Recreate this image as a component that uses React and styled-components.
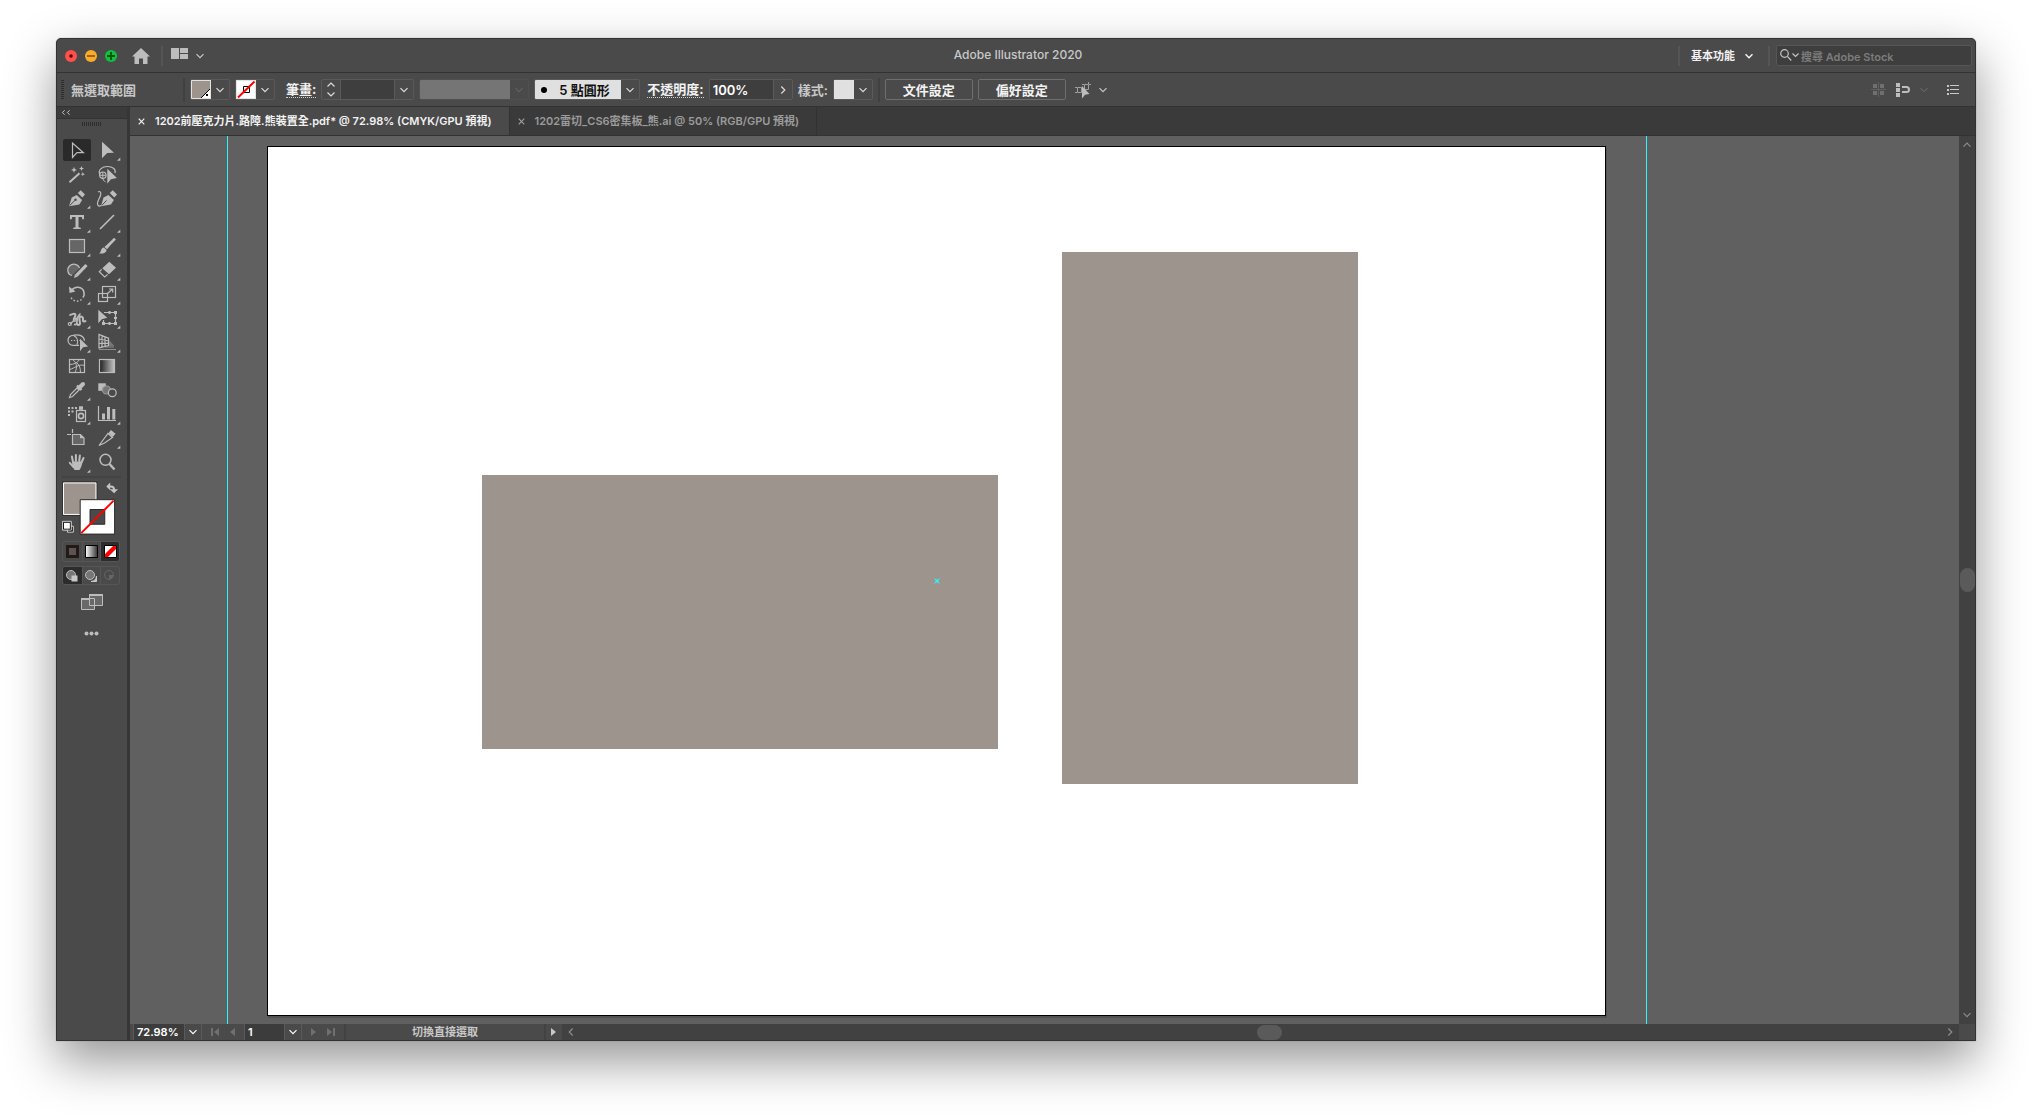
import React, { useState } from 'react';
import styled, { createGlobalStyle, css } from 'styled-components';

const colors = {
  bar: '#4a4a4a',
  dark: '#3b3b3b',
  line: '#323232',
  edge: '#5a5a5a',
  canvas: '#606060',
  icon: '#bdbdbd',
  text: '#c8c8c8',
  white: '#f2f2f2',
  taupe: '#9d948e',
  guide: '#2ff3f7',
};

const GlobalStyle = createGlobalStyle`
  * { box-sizing: border-box; }
  body {
    margin: 0;
    background: #fff;
    color: ${colors.text};
    font-family: Inter, "Noto Sans CJK TC", sans-serif;
    font-size: 11px;
    line-height: 16px;
  }
  button, input, select { font: inherit; color: inherit; }
`;

const Desktop = styled.div`
  height: 100vh;
  padding: 38px 56px 74px;
  display: flex;
`;

const Window = styled.div`
  flex: 1;
  min-width: 0;
  display: flex;
  flex-direction: column;
  border: 1px solid ${colors.line};
  border-radius: 5px 5px 0 0;
  background: ${colors.bar};
  box-shadow: 0 0 1px rgba(0, 0, 0, 0.5), 0 20px 50px rgba(0, 0, 0, 0.42);
  overflow: hidden;
`;

const PlainButton = styled.button`
  display: flex;
  align-items: center;
  justify-content: center;
  padding: 0;
  border: none;
  background: none;
  cursor: pointer;
`;

const Spacer = styled.div`
  flex: 1;
`;

const Divider = styled.div`
  width: 2px;
  height: ${props => props.$h || 20}px;
  margin-left: ${props => props.$ml || 0}px;
  background: ${props => (props.$dark ? '#404040' : '#555')};
`;

/* ---------- title bar ---------- */

const TitleBar = styled.header`
  height: 34px;
  flex: none;
  display: grid;
  grid-template-columns: 1fr auto 1fr;
  align-items: center;
  border-bottom: 1px solid ${colors.line};
`;

const TitleLeft = styled.div`
  display: flex;
  align-items: center;
  gap: 8px;
  padding-left: 8px;
`;

const TitleRight = styled(TitleLeft)`
  justify-content: flex-end;
  gap: 6px;
  padding: 0 3px 0 0;
`;

const Light = styled(PlainButton)`
  width: 12px;
  height: 12px;
  border-radius: 50%;
  background: ${props => props.$color};
`;

const HomeButton = styled(PlainButton)`
  margin: 0 3px 0 7px;
`;

const LayoutButton = styled(PlainButton)`
  gap: 8px;
  color: ${colors.text};
`;

const AppTitle = styled.h1`
  margin: 0;
  padding: 0 0 2px 4px;
  font-size: 12px;
  line-height: 16px;
  font-weight: 500;
`;

const SelectBox = styled.span`
  position: relative;
  display: flex;
  align-items: center;
`;

const BareSelect = styled.select`
  appearance: none;
  border: none;
  outline: none;
  background: none;
  padding: 0;
  height: 18px;
  line-height: 18px;
`;

const WorkspaceSelect = styled(SelectBox)`
  gap: 10px;
  margin: 0 9px 0 5px;
  color: ${colors.white};
  font-weight: 600;
`;

const SearchField = styled.label`
  width: 196px;
  height: 21px;
  display: flex;
  align-items: center;
  gap: 2px;
  padding-left: 3px;
  border: 1px solid #565656;
  border-radius: 2px;
  background: #3e3e3e;

  input {
    flex: 1;
    min-width: 0;
    padding: 2px 0 0;
    border: none;
    outline: none;
    background: none;
  }
  input::placeholder {
    color: #7c7c7c;
    opacity: 1;
    font-weight: 600;
  }
`;

/* ---------- control bar ---------- */

const ControlBar = styled.div`
  height: 34px;
  flex: none;
  display: flex;
  align-items: center;
  padding: 0 16px 0 4px;
  border-bottom: 1px solid ${colors.line};
  font-size: 13px;
  white-space: nowrap;
`;

const Grip = styled.div`
  width: ${props => (props.$wide ? '20px' : '3px')};
  height: ${props => (props.$wide ? '4px' : '20px')};
  background: repeating-linear-gradient(
    ${props => (props.$wide ? '90deg' : '180deg')},
    #2e2e2e 0 1px,
    transparent 1px 2px
  );
`;

const SelectionLabel = styled.div`
  width: 119px;
  padding-left: 7px;
  font-weight: 600;
`;

const Group = styled.div`
  display: flex;
  align-items: center;
  margin-left: 5px;
  height: 21px;
  width: ${props => (props.$w ? `${props.$w}px` : 'auto')};
  border: 1px solid #5a5a5a;
  border-radius: 2px;
  overflow: hidden;

  ${props => props.$dim && css`
    border-color: #505050;
  `}
`;

const DropButton = styled(PlainButton)`
  width: ${props => props.$w || 18}px;
  height: 100%;
  color: ${props => (props.$dim ? '#616161' : '#dcdcdc')};
`;

const Swatch = styled.span`
  display: block;
  width: 20px;
  height: 19px;
  border: 1px solid #e2e2e2;
  background: ${props => props.$color};

  svg { display: block; }
`;

const DottedLabel = styled.label`
  margin-left: ${props => props.$ml}px;
  color: ${colors.white};
  font-weight: 700;
  line-height: 15px;
  border-bottom: 1px dotted #d0d0d0;
`;

const FieldInput = styled.input`
  flex: 1;
  min-width: 0;
  height: 100%;
  padding: 0 3px;
  border: solid ${colors.edge};
  border-width: 0 1px;
  border-left-width: ${props => (props.$first ? 0 : 1)}px;
  outline: none;
  background: #3e3e3e;
  color: #fff;
  font-weight: 600;
`;

const StrokeProfile = styled.div`
  width: 90px;
  height: 100%;
  background: #757575;
`;

const BrushValue = styled.span`
  flex: 1;
  height: 100%;
  display: flex;
  align-items: center;
  gap: 12px;
  padding-left: 6px;
  background: #e0e0e0;
  color: #111;
  font-weight: 600;
`;

const BrushDot = styled.span`
  width: 6px;
  height: 6px;
  border-radius: 50%;
  background: #000;
`;

const StyleLabel = styled.span`
  margin-left: 5px;
  font-weight: 600;
`;

const OutlineButton = styled(PlainButton)`
  width: 88px;
  height: 21px;
  margin-left: 5px;
  border: 1px solid #6e6e6e;
  border-radius: 2px;
  color: ${colors.white};
  font-weight: 700;
`;

const AlignTools = styled(PlainButton)`
  gap: 8px;
  margin-left: 9px;
  color: ${colors.text};
`;

const RightTools = styled.div`
  display: flex;
  align-items: center;
  gap: 9px;
  color: #707070;

  button:last-child { margin-left: 10px; }
`;

/* ---------- tool panel ---------- */

const Body = styled.div`
  flex: 1;
  min-height: 0;
  display: flex;
`;

const Panel = styled.aside`
  width: 73px;
  flex: none;
  display: flex;
  flex-direction: column;
  border-right: 3px solid #363636;
`;

const PanelHead = styled.div`
  height: 12px;
  display: flex;
  align-items: center;
  padding-left: 4px;
  background: ${colors.dark};
  border-bottom: 1px solid ${colors.line};
`;

const PanelBody = styled.div`
  display: flex;
  flex-direction: column;
  padding: 3px 6px 0 5px;
`;

const GripRow = styled.div`
  display: flex;
  justify-content: center;
  height: 17px;
`;

const ToolGrid = styled.div`
  display: grid;
  grid-template-columns: 28px 28px;
  gap: 2px;
  padding-left: 1px;
`;

const ToolButton = styled(PlainButton)`
  width: 28px;
  height: 22px;
  border-radius: 2px;
  color: ${colors.icon};
  background: ${props => (props.$active ? '#2a2a2a' : 'none')};
`;

const PanelRule = styled.div`
  height: 2px;
  margin: 3px 0;
  background: #434343;
`;

const ColorArea = styled.div`
  display: flex;
  height: 58px;
  margin-bottom: 2px;
`;

const CellRow = styled.div`
  display: grid;
  grid-template-columns: repeat(3, 1fr);
  height: ${props => props.$h}px;
  margin: 0 1px 4px 0;
  border: 1px solid #565656;
  border-radius: 3px;
  overflow: hidden;
`;

const Cell = styled(PlainButton)`
  background: ${props => (props.$active ? '#2c2c2c' : 'none')};

  & + & { border-left: 1px solid #565656; }
`;

const PanelFoot = styled.div`
  display: flex;
  flex-direction: column;
  align-items: center;
  gap: 21px;
  padding-top: 5px;
`;

/* ---------- document area ---------- */

const Main = styled.main`
  flex: 1;
  min-width: 0;
  display: flex;
  flex-direction: column;
`;

const Tabs = styled.div`
  height: 29px;
  flex: none;
  display: flex;
  background: #3a3a3a;
  border-bottom: 1px solid ${colors.line};
`;

const Tab = styled.div`
  display: flex;
  align-items: center;
  gap: 10px;
  padding: 0 17px 0 8px;
  border-right: 1px solid ${colors.line};
  background: ${props => (props.$active ? colors.bar : 'none')};
  color: ${props => (props.$active ? colors.white : '#9c9c9c')};
  font-weight: 600;
  white-space: nowrap;
`;

const CanvasRow = styled.div`
  flex: 1;
  min-height: 0;
  display: flex;
`;

const Canvas = styled.div`
  position: relative;
  flex: 1;
  min-width: 0;
  background: ${colors.canvas};
  overflow: hidden;
`;

const Artboard = styled.div`
  position: absolute;
  left: 137px;
  top: 10px;
  width: 1339px;
  height: 870px;
  background: #fff;
  border: 1px solid #000;
  box-shadow: 1px 2px 0 #525252;
`;

const Shape = styled.div`
  position: absolute;
  left: ${props => props.$x}px;
  top: ${props => props.$y}px;
  width: ${props => props.$w}px;
  height: ${props => props.$h}px;
  background: ${colors.taupe};
`;

const Guide = styled.div`
  position: absolute;
  left: ${props => props.$x}px;
  top: 0;
  bottom: 0;
  width: 1px;
  background: ${colors.guide};
`;

const CenterMark = styled.svg`
  position: absolute;
  left: 666px;
  top: 431px;
`;

const VScroll = styled.div`
  width: 16px;
  flex: none;
  display: flex;
  flex-direction: column;
  align-items: center;
  padding: 5px 0;
  background: #414141;
  color: #8c8c8c;
`;

const Thumb = styled.div`
  width: ${props => props.$w}px;
  height: ${props => props.$h}px;
  border-radius: 8px;
  background: #5a5a5a;
`;

const StatusBar = styled.footer`
  height: 16px;
  flex: none;
  display: flex;
  padding-left: 3px;
  color: ${colors.text};
`;

const StatusField = styled(SelectBox)`
  width: ${props => props.$w}px;
  padding-left: 3px;
  background: #3c3c3c;
  color: #fff;
  font-weight: 600;
  border-left: 1px solid ${colors.edge};

  select { flex: 1; min-width: 0; }
`;

const DropMark = styled.span`
  width: 18px;
  height: 100%;
  display: flex;
  align-items: center;
  justify-content: center;
  background: ${colors.bar};
  border: solid ${colors.edge};
  border-width: 0 1px;
  pointer-events: none;
`;

const PageNav = styled.div`
  width: 42px;
  display: flex;
  align-items: center;
  justify-content: center;
  gap: 10px;
  color: #707070;
`;

const StatusText = styled.div`
  width: 202px;
  border: solid #424242;
  border-width: 0 2px;
  text-align: center;
  line-height: 17px;
  font-weight: 600;
`;

const HScroll = styled.div`
  flex: 1;
  min-width: 0;
  display: flex;
  align-items: center;
  padding: 0 5px;
  background: #414141;
  color: #8c8c8c;
`;

const ScrollCorner = styled.div`
  width: 16px;
`;

const Track = styled.div`
  flex: ${props => props.$grow};
`;

/* ---------- icons ---------- */

const chevronPaths = {
  down: 'M0.5 2.2 4 5.7 7.5 2.2',
  up: 'M0.5 5.7 4 2.2 7.5 5.7',
  left: 'M5.7 0.5 2.2 4l3.5 3.5',
  right: 'M2.3 0.5 5.8 4 2.3 7.5',
};

const Chevron = ({ dir = 'down', size = 8, w = 1.2 }) => (
  <svg width={size} height={size} viewBox="0 0 8 8" fill="none" stroke="currentColor" strokeWidth={w}>
    <path d={chevronPaths[dir]} />
  </svg>
);

const CloseIcon = () => (
  <svg width="7" height="7" viewBox="0 0 7 7" stroke="currentColor" strokeWidth="1.2">
    <path d="M.7.7l5.600 5.600M6.300.7L.7 6.300" />
  </svg>
);

const solid = { fill: 'currentColor', stroke: 'none' };

const tools = [
  { name: '選取', art: <path d="M9.500 4v14.500l4.500-4.800h6.400z" /> },
  { name: '直接選取', more: true, art: <path d="M9 2.700v16.600l5.200-5.200L21 13.700z" {...solid} /> },
  {
    name: '魔術棒',
    art: (
      <>
        <path d="M6.500 19.300l10-9" strokeWidth="2" />
        <path d="M11 3.800l.8 2.200 2.200.9-2.200.9-.8 2.200-.8-2.200-2.200-.9 2.200-.9zM18.500 3l.7 1.800 1.800.7-1.800.7-.7 1.800-.7-1.800-1.800-.7 1.800-.7zM19.800 9l.6 1.600 1.600.6-1.600.6-.6 1.600-.6-1.600-1.600-.6 1.600-.6z" {...solid} />
      </>
    ),
  },
  {
    name: '套索',
    art: (
      <>
        <path d="M7 11.500C4.500 7 9 3.500 14.500 3.500c5 0 8.500 2.500 7.500 6.500" />
        <circle cx="9.800" cy="12.200" r="3.200" />
        <path d="M7 12.300h5.800M9.800 9v5.500c0 2.200.8 3.500 2.700 4.300" strokeWidth="1" />
        <path d="M14.300 5.800v15l3.600-4.600 6-1.200z" {...solid} />
      </>
    ),
  },
  {
    name: '鋼筆',
    more: true,
    art: (
      <>
        <path d="M6 19.200l2.700-8.700 5-2.500 5.400 5-2.700 4.500z" {...solid} />
        <path d="M14.800 6l3-2.800 4.200 4.200-2.700 3z" {...solid} />
        <path d="M6.500 18.700l5.300-5.200" stroke="#4a4a4a" strokeWidth="1" />
        <circle cx="12.500" cy="12.800" r="1.200" fill="#4a4a4a" stroke="none" />
      </>
    ),
  },
  {
    name: '曲線',
    art: (
      <>
        <path d="M8 19.200l2.500-8.700 5-2.500 5.400 5-3 4.500z" {...solid} />
        <path d="M16.800 6l3-2.800L24 7.400l-2.700 3z" {...solid} />
        <path d="M8.500 18.700l5-5.200" stroke="#4a4a4a" strokeWidth="1" />
        <path d="M5 5c2-1.500 3.500.5 2.500 3.500S3 16 5 18.500c1 1 2.500.8 3.500-.3" />
      </>
    ),
  },
  { name: '文字', more: true, art: <path d="M7 4h14v4.300h-1.600L18.800 6h-3.300v10.300l2.300.4V18h-7.600v-1.300l2.300-.4V6H9.200l-.6 2.300H7z" {...solid} /> },
  { name: '線段', more: true, art: <path d="M7 18L21 4" strokeWidth="1.600" /> },
  { name: '矩形', more: true, art: <rect x="6.500" y="4.500" width="15" height="13" fill="#666" /> },
  {
    name: '繪圖筆刷',
    more: true,
    art: (
      <>
        <path d="M22.300 3.300L14 14.200l-2.600-2.300z" {...solid} />
        <path d="M22 3.600L13.300 12.500" strokeWidth="2.600" />
        <path d="M10.800 12.500l2.800 2.500c-.3 3-3.800 4-7.600 3.500 2.500-1.200 1.500-5.500 4.800-6z" {...solid} />
      </>
    ),
  },
  {
    name: 'Shaper',
    more: true,
    art: (
      <>
        <path d="M9 16.500C4.500 15.500 3.500 10 6.500 7s8.500-2.200 10 2" fill="#666" />
        <path d="M23.500 6L13.500 16.300" strokeWidth="3.200" />
        <path d="M12 15l2.800 2.600L11 19z" {...solid} />
      </>
    ),
  },
  {
    name: '橡皮擦',
    more: true,
    art: (
      <>
        <path d="M16.300 2.700L23 8.800l-7 6.400L9.300 9.200z" {...solid} />
        <path d="M8.700 10.300L6.300 12.800l5.400 5.200 3-2.600" />
      </>
    ),
  },
  {
    name: '旋轉',
    more: true,
    art: (
      <>
        <path d="M8.500 7.500C12 2.500 19 3.500 20.800 8.500c.8 2.500.2 4.500-.8 6" strokeWidth="1.600" />
        <path d="M18.500 16.500C15 19.500 9 18.500 7.500 13" strokeDasharray="1.500 2" strokeWidth="1.500" />
        <path d="M6 3.500l.5 6.500 6-1.500z" {...solid} />
      </>
    ),
  },
  {
    name: '縮放',
    more: true,
    art: (
      <>
        <rect x="9.500" y="3.500" width="13" height="11" />
        <rect x="5.500" y="10.500" width="9" height="8" />
        <path d="M14 11l5.500-5M16 6h3.700v3.500" />
      </>
    ),
  },
  {
    name: '寬度',
    more: true,
    art: (
      <>
        <path d="M7 17l5-4.500 5-4" />
        <circle cx="6.800" cy="17" r="1.500" />
        <circle cx="11.800" cy="12.800" r="1.500" />
        <path d="M6.500 7.500c2 1.500 3.500-2 5.500-.5 1.500 1.500-1 3.500-1 5M14 16c-.5 2.500 3 2.500 3 0 0-2-1.500-4 0-6 1.500-1.500 3.500.5 3 2.500-.5 2.500 1.500 2.500 3 1" strokeWidth="2" />
        <path d="M11 17.500c2 .5 3-1 3-3 0-3 1-6 3.500-8" strokeWidth="1.600" />
      </>
    ),
  },
  {
    name: '任意變形',
    more: true,
    art: (
      <>
        <path d="M5.300 2.800v13.400l3.500-3.900 5.400-1.600z" {...solid} />
        <path d="M11 5.500h11.500v11h-12V13" />
        <path d="M21 4h3v3h-3zM21 15h3v3h-3zM9 15h3v3H9zM15.500 4h2v3h-2zM15.500 15h2v3h-2zM21 10h3v2h-3z" {...solid} />
      </>
    ),
  },
  {
    name: '形狀建立程式',
    more: true,
    art: (
      <>
        <path d="M10 4.300a5 5 0 1 0 0 10h6M10 4.300c6-1.500 11 .5 11.500 5.500" />
        <path d="M8 9.500h9" strokeDasharray="1.300 1.500" />
        <path d="M11 4.800c3 1.500 4.500 5 3 9" />
        <path d="M17 7.800v12.400l3-3.900 5-.8z" {...solid} />
      </>
    ),
  },
  {
    name: '透視格點',
    more: true,
    art: (
      <>
        <path d="M6 3.500V17l9.500-2.500V7.200zM6 8l9.500 2M6 12.500l9.500-.3M9 4.500V16M12 5.500v10" />
        <path d="M6 18.500h17M12 16h9" opacity=".6" />
        <path d="M16 9l5.500 6H16z" fill="#777" stroke="none" />
      </>
    ),
  },
  {
    name: '網格',
    art: (
      <>
        <rect x="6.500" y="4.500" width="15" height="13" />
        <path d="M6.500 9.500c4.500 0 8-1.500 10-5M6.500 14.500c5-1 9-6 15-4M9.500 4.500c4.500 3 5 8 2.500 13M14 8c2.500 2.500 3.500 5 3.500 9.500" strokeWidth="1" />
      </>
    ),
  },
  {
    name: '漸層',
    art: (
      <>
        <defs>
          <linearGradient id="toolGradient">
            <stop offset="0" stopColor="#1e1e1e" />
            <stop offset="1" stopColor="#c4c4c4" />
          </linearGradient>
        </defs>
        <rect x="6.500" y="4.500" width="15" height="13" fill="url(#toolGradient)" />
      </>
    ),
  },
  {
    name: '檢色滴管',
    more: true,
    art: (
      <>
        <path d="M14.500 8.500l-7 7-1 3 3-1 7-7" />
        <path d="M14 6.500l4.500 4.500" strokeWidth="2.400" />
        <path d="M16 9l4-4" strokeWidth="4" strokeLinecap="round" />
      </>
    ),
  },
  {
    name: '漸變',
    art: (
      <>
        <rect x="5.300" y="4.300" width="7.500" height="7.500" {...solid} />
        <circle cx="13.500" cy="11" r="4" fill="#777" stroke="#999" />
        <circle cx="19.300" cy="13.700" r="3.900" fill="#4a4a4a" />
      </>
    ),
  },
  {
    name: '符號噴灑器',
    more: true,
    art: (
      <>
        <path d="M5 4h2v2H5zM8.500 4h2v2h-2zM12 4h2v2h-2zM5 7.500h2v2H5zM8.500 7.500h2v2h-2zM5 11h2v2H5z" {...solid} />
        <path d="M16 3.300h4v3.500h-4z" {...solid} />
        <rect x="13.500" y="7.500" width="9" height="11" />
        <circle cx="18" cy="13" r="2.600" strokeWidth="1.600" />
      </>
    ),
  },
  {
    name: '長條圖',
    more: true,
    art: (
      <>
        <path d="M5.500 3v14.500H23" />
        <path d="M9 10.500h3v6H9zM14 4h3v12.500h-3zM19.300 6h3v10.500h-3z" {...solid} />
      </>
    ),
  },
  {
    name: '工作區域',
    art: (
      <>
        <path d="M4 7.500h4M9.500 2v4" />
        <path d="M9.500 7.500h8l3.500 3.500v6.500H9.500z" fill="#666" />
        <path d="M17 7v4.300h4.300z" {...solid} />
      </>
    ),
  },
  {
    name: '切片',
    more: true,
    art: (
      <>
        <path d="M6 18.500l9-12 4.500 4-8 5.500z" />
        <path d="M15.500 6l2.500-3 4.500 3.800-2.800 3.200z" {...solid} />
      </>
    ),
  },
  {
    name: '手形',
    more: true,
    art: (
      <>
        <path d="M10 11L8.900 5.500M12.900 10V4M16.200 10l.7-5.500M18.500 11.500l2-4.500M10.500 16L6.800 11.800" strokeWidth="2" strokeLinecap="round" />
        <path d="M9 10.500h10.300c-.2 4-1.300 6-2.800 8.500h-5C10 17 9 13.500 9 10.500z" {...solid} />
      </>
    ),
  },
  {
    name: '縮放顯示',
    art: (
      <>
        <circle cx="12.500" cy="8.800" r="5.500" strokeWidth="1.500" />
        <path d="M16.500 13l5 5.500" strokeWidth="2.400" />
      </>
    ),
  },
];

const ToolIcon = ({ art, more }) => (
  <svg width="28" height="22" viewBox="0 0 28 22" fill="none" stroke="currentColor" strokeWidth="1.2">
    {art}
    {more && <path d="M27.300 18.500v3.200H24z" {...solid} />}
  </svg>
);

const ShapeMode = ({ kind }) => (
  <svg width="14" height="14" viewBox="0 0 14 14">
    <circle cx="6" cy="6" r="4.500" fill={kind === 'inside' ? 'none' : '#777'} stroke={kind === 'inside' ? '#666' : '#bdbdbd'} />
    {kind === 'normal' && <path d="M6.500 6.500h6v6h-6z" fill="#c8c8c8" />}
    {kind === 'behind' && <path d="M12.500 7v5.500H7a6 6 0 0 0 5.500-5.500z" fill="#c8c8c8" stroke="#c8c8c8" />}
    {kind === 'inside' && <path d="M6 6h4v1a4 4 0 0 1-3 3H6z" fill="#666" />}
  </svg>
);

const FillStroke = () => (
  <svg width="60" height="58" viewBox="0 0 60 58">
    <path d="M.5.500h35v34h-35z" fill={colors.taupe} stroke="#2a2a2a" />
    <path d="M1.500 1.500h33v32h-33z" fill="none" stroke="#fff" />
    <path d="M18.500 18.500h35v35h-35z" fill="#fff" stroke="#2a2a2a" />
    <path d="M28.500 28.500h15v15h-15z" fill="#4a4a4a" stroke="#2a2a2a" />
    <path d="M19.500 52.500l33-33" stroke="#f00" strokeWidth="2" />
    <path d="M48 5h1.500q3.500 0 3.500 3.500V9" fill="none" stroke="#c4c4c4" strokeWidth="2" />
    <path d="M49 1v8l-4-4zM48.500 8h8.500l-4 4z" fill="#c4c4c4" />
    <path d="M5.500 45.500h6v6h-6z" fill="#000" stroke="#ddd" />
    <path d="M1.500 41.500h7v7h-7z" fill="#fff" stroke="#111" />
    <path d="M.5 40.500h9v9h-9z" fill="none" stroke="#ccc" />
  </svg>
);

const App = () => {
  const [activeTool, setActiveTool] = useState('選取');

  return (
    <Desktop>
      <GlobalStyle />
      <Window>
        <TitleBar>
          <TitleLeft>
            <Light $color="#ff4f4b" aria-label="關閉">
              <svg width="12" height="12"><circle cx="6" cy="6" r="1.800" fill="#5c0000" /></svg>
            </Light>
            <Light $color="#f8ab2d" aria-label="縮小">
              <svg width="12" height="12"><path d="M2 6h8" stroke="#8a4b00" strokeWidth="1.500" /></svg>
            </Light>
            <Light $color="#12bf3e" aria-label="放大">
              <svg width="12" height="12"><path d="M2 6h8M6 2v8" stroke="#00560f" strokeWidth="1.800" /></svg>
            </Light>
            <HomeButton aria-label="首頁">
              <svg width="18" height="16" viewBox="0 0 18 16">
                <path d="M9 0l9 8.500h-2.500V16H11v-5.500H7V16H2.500V8.500H0z" fill={colors.icon} />
              </svg>
            </HomeButton>
            <Divider />
            <LayoutButton aria-label="排列文件">
              <svg width="17" height="16" viewBox="0 0 17 16" fill={colors.icon}>
                <path d="M0 0h8v11H0zM9 0h8v5H9zM9 6h8v5H9z" />
              </svg>
              <Chevron />
            </LayoutButton>
          </TitleLeft>
          <AppTitle>Adobe Illustrator 2020</AppTitle>
          <TitleRight>
            <Divider />
            <WorkspaceSelect>
              <BareSelect aria-label="工作區"><option>基本功能</option></BareSelect>
              <Chevron w={1.5} />
            </WorkspaceSelect>
            <Divider />
            <SearchField>
              <svg width="19" height="13" viewBox="0 0 19 13" fill="none" stroke="#c4c4c4" strokeWidth="1.200">
                <circle cx="4.500" cy="4.500" r="3.800" />
                <path d="M7.300 7.300l4 4.200M12.500 4.500l3 3 3-3" />
              </svg>
              <input type="search" placeholder="搜尋 Adobe Stock" aria-label="搜尋 Adobe Stock" />
            </SearchField>
          </TitleRight>
        </TitleBar>

        <ControlBar>
          <Grip />
          <SelectionLabel>無選取範圍</SelectionLabel>
          <Divider $dark $h={24} />
          <Group>
            <Swatch $color={colors.taupe}>
              <svg width="18" height="17">
                <path d="M18 8v9H9z" fill="#fff" />
                <path d="M18 8l-9 9" stroke="#000" />
                <path d="M14 13h2v2h-2z" fill="#000" />
              </svg>
            </Swatch>
            <DropButton aria-label="填色"><Chevron /></DropButton>
          </Group>
          <Group>
            <Swatch $color="#fff">
              <svg width="18" height="17">
                <path d="M6.500 5.500h6v6h-6z" fill="none" stroke="#000" />
                <path d="M1 16.500L17.500.5" stroke="#f00" strokeWidth="2" />
              </svg>
            </Swatch>
            <DropButton aria-label="筆畫顏色"><Chevron /></DropButton>
          </Group>
          <DottedLabel htmlFor="stroke" $ml={11}>筆畫:</DottedLabel>
          <Group $w={93}>
            <DropButton aria-label="調整筆畫寬度">
              <svg width="8" height="15" viewBox="0 0 8 15" fill="none" stroke="#dcdcdc" strokeWidth="1.200">
                <path d="M.5 4.500L4 1l3.500 3.500M.5 10.500L4 14l3.500-3.500" />
              </svg>
            </DropButton>
            <FieldInput id="stroke" />
            <DropButton aria-label="筆畫寬度"><Chevron /></DropButton>
          </Group>
          <Group $dim>
            <StrokeProfile />
            <DropButton $dim aria-label="變數寬度描述檔" disabled><Chevron /></DropButton>
          </Group>
          <Group $w={106}>
            <BrushValue><BrushDot />5 點圓形</BrushValue>
            <DropButton aria-label="筆刷定義"><Chevron /></DropButton>
          </Group>
          <DottedLabel htmlFor="opacity" $ml={7}>不透明度:</DottedLabel>
          <Group $w={84}>
            <FieldInput id="opacity" $first defaultValue="100%" />
            <DropButton aria-label="不透明度"><Chevron dir="right" /></DropButton>
          </Group>
          <StyleLabel>樣式:</StyleLabel>
          <Group>
            <Swatch $color="#e0e0e0" />
            <DropButton aria-label="繪圖樣式"><Chevron /></DropButton>
          </Group>
          <Divider $dark $h={24} $ml={5} />
          <OutlineButton>文件設定</OutlineButton>
          <OutlineButton>偏好設定</OutlineButton>
          <AlignTools aria-label="選取類似物件">
            <svg width="16" height="18" viewBox="0 0 16 18" fill="none" stroke="#a0a0a0">
              <path d="M2.500 6.500h4v5h-4zM9.500 3.500h4v5h-4z" />
              <path d="M0 6.500h2M0 11.500h2M7 3.500h2M14 3.500h2M13.500 1v2" strokeWidth="1" />
              <path d="M7 5v12.500l3-3.800 4.500-.7z" fill="#bdbdbd" stroke="none" />
            </svg>
            <Chevron />
          </AlignTools>
          <Spacer />
          <RightTools>
            <PlainButton aria-label="對齊像素格點" disabled>
              <svg width="16" height="16" viewBox="0 0 16 16" fill="#707070">
                <path d="M2 2h4v4H2zM9 2h4v4H9zM2 9h4v4H2zM9 9h4v4H9z" />
                <path d="M7 0h1v15H7zM0 7h15v1H0z" fill="#606060" />
              </svg>
            </PlainButton>
            <PlainButton aria-label="對齊">
              <svg width="15" height="16" viewBox="0 0 15 16" fill={colors.icon}>
                <path d="M0 1h4v4H0zM0 6h4v4H0zM0 11h4v4H0z" />
                <path d="M6 5h4.500a2.500 2.500 0 0 1 0 5H6" fill="none" stroke={colors.icon} strokeWidth="2" />
              </svg>
            </PlainButton>
            <Chevron w={1} />
            <PlainButton aria-label="控制選單">
              <svg width="12" height="10" viewBox="0 0 12 10" fill={colors.text}>
                <path d="M0 0h2v2H0zM0 4h2v2H0zM0 8h2v2H0zM3 0h9v1H3zM3 4h9v1H3zM3 8h9v1H3z" />
              </svg>
            </PlainButton>
          </RightTools>
        </ControlBar>

        <Body>
          <Panel>
            <PanelHead>
              <Chevron dir="left" size={5} w={1.6} />
              <Chevron dir="left" size={5} w={1.6} />
            </PanelHead>
            <PanelBody>
              <GripRow><Grip $wide /></GripRow>
              <ToolGrid>
                {tools.map(tool => (
                  <ToolButton
                    key={tool.name}
                    aria-label={tool.name}
                    $active={tool.name === activeTool}
                    onClick={() => setActiveTool(tool.name)}
                  >
                    <ToolIcon art={tool.art} more={tool.more} />
                  </ToolButton>
                ))}
              </ToolGrid>
              <PanelRule />
              <ColorArea><FillStroke /></ColorArea>
              <CellRow $h={21}>
                <Cell aria-label="顏色">
                  <svg width="13" height="13"><path d="M1.500 1.500h10v10h-10z" fill="#5a5553" stroke="#231a18" strokeWidth="3" /></svg>
                </Cell>
                <Cell aria-label="漸層">
                  <svg width="13" height="13">
                    <defs>
                      <linearGradient id="cellGradient">
                        <stop offset="0" stopColor="#fff" />
                        <stop offset="1" stopColor="#333" />
                      </linearGradient>
                    </defs>
                    <path d="M.5.500h12v12H.5z" fill="url(#cellGradient)" stroke="#000" />
                  </svg>
                </Cell>
                <Cell $active aria-label="無">
                  <svg width="13" height="13">
                    <path d="M.5.500h12v12H.5z" fill="#fff" stroke="#000" />
                    <path d="M1 9v3h3l8-8V1H9z" fill="#f00" />
                  </svg>
                </Cell>
              </CellRow>
              <CellRow $h={19}>
                <Cell $active aria-label="一般繪製"><ShapeMode kind="normal" /></Cell>
                <Cell aria-label="繪製下層"><ShapeMode kind="behind" /></Cell>
                <Cell aria-label="繪製內側" disabled><ShapeMode kind="inside" /></Cell>
              </CellRow>
              <PanelFoot>
                <PlainButton aria-label="變更螢幕模式">
                  <svg width="22" height="16" fill="#686868" stroke={colors.icon}>
                    <path d="M.5 4.500h13v11H.5zM8.500.500h13v11h-13z" />
                    <path d="M0 5h8M8 1h14" strokeWidth="2" />
                  </svg>
                </PlainButton>
                <PlainButton aria-label="編輯工具列">
                  <svg width="15" height="5" fill={colors.icon}>
                    <circle cx="2.500" cy="2.500" r="2" />
                    <circle cx="7.500" cy="2.500" r="2" />
                    <circle cx="12.500" cy="2.500" r="2" />
                  </svg>
                </PlainButton>
              </PanelFoot>
            </PanelBody>
          </Panel>

          <Main>
            <Tabs>
              <Tab $active>
                <PlainButton aria-label="關閉文件"><CloseIcon /></PlainButton>
                1202前壓克力片.路障.熊裝置全.pdf* @ 72.98% (CMYK/GPU 預視)
              </Tab>
              <Tab>
                <PlainButton aria-label="關閉文件"><CloseIcon /></PlainButton>
                1202雷切_CS6密集板_熊.ai @ 50% (RGB/GPU 預視)
              </Tab>
            </Tabs>
            <CanvasRow>
              <Canvas>
                <Guide $x={97} />
                <Guide $x={1516} />
                <Artboard>
                  <Shape $x={214} $y={328} $w={516} $h={274} />
                  <Shape $x={794} $y={105} $w={296} $h={532} />
                  <CenterMark width="6" height="6" viewBox="0 0 6 6">
                    <path d="M.5.500l5 5M5.500.500l-5 5" stroke={colors.guide} />
                    <path d="M1.500 1.500h3v3h-3z" fill={colors.guide} />
                  </CenterMark>
                </Artboard>
              </Canvas>
              <VScroll>
                <Chevron dir="up" />
                <Track $grow={418} />
                <Thumb $w={15} $h={24} />
                <Track $grow={418} />
                <Chevron />
              </VScroll>
            </CanvasRow>
            <StatusBar>
              <StatusField $w={69}>
                <BareSelect aria-label="縮放層級"><option>72.98%</option></BareSelect>
                <DropMark><Chevron /></DropMark>
              </StatusField>
              <PageNav>
                <svg width="9" height="10" fill="currentColor"><path d="M0 1h2v8H0zM8 1v8L3 5z" /></svg>
                <svg width="6" height="10" fill="currentColor"><path d="M5 1v8L0 5z" /></svg>
              </PageNav>
              <StatusField $w={58}>
                <BareSelect aria-label="工作區域導覽"><option>1</option></BareSelect>
                <DropMark><Chevron /></DropMark>
              </StatusField>
              <PageNav>
                <svg width="6" height="10" fill="currentColor"><path d="M0 1v8l5-4z" /></svg>
                <svg width="9" height="10" fill="currentColor"><path d="M0 1v8l5-4zM6 1h2v8H6z" /></svg>
              </PageNav>
              <StatusText>切換直接選取</StatusText>
              <DropButton $w={16} aria-label="狀態列選單">
                <svg width="6" height="10" fill={colors.text}><path d="M0 1v8l5-4z" /></svg>
              </DropButton>
              <HScroll>
                <Chevron dir="left" />
                <Track $grow={684} />
                <Thumb $w={25} $h={15} />
                <Track $grow={666} />
                <Chevron dir="right" />
              </HScroll>
              <ScrollCorner />
            </StatusBar>
          </Main>
        </Body>
      </Window>
    </Desktop>
  );
};

export default App;
